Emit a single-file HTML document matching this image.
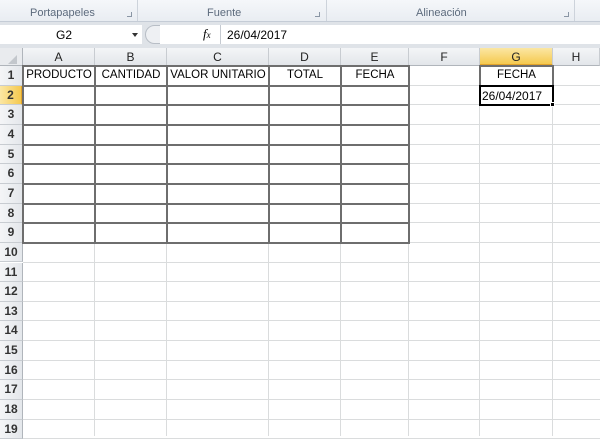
<!DOCTYPE html>
<html><head><style>
*{margin:0;padding:0;box-sizing:border-box}
body{width:600px;height:436px;overflow:hidden;background:#fff;font-family:"Liberation Sans",sans-serif;position:relative}
.a{position:absolute}
.rib{left:0;top:0;width:600px;height:22px;background:linear-gradient(#f5f7fa,#e9edf2);border-bottom:1px solid #c5ccd6}
.gl{top:7px;font-size:11px;color:#5d6b7d}
.sep{top:0;width:1px;height:21px;background:#cdd3db}
.fb{left:0;top:22px;width:600px;height:26px;background:#dfe3e8}
.ch{top:48px;height:18px;background:linear-gradient(#f4f5f7,#e3e6ea);border-right:1px solid #c8ccd1;border-bottom:1px solid #b0b5bb;font-size:12px;text-align:center;line-height:18px;color:#222}
.rh{left:0;width:23px;background:linear-gradient(90deg,#f4f5f7,#e4e7eb);border-right:1px solid #b0b5bb;border-bottom:1px solid #c8ccd1;font-size:12px;text-align:center;color:#333;font-weight:bold}
.hl{left:23px;width:577px;height:1px;background:#dadcdd}
.vl{top:66px;width:1px;height:370px;background:#dadcdd}
.t{font-size:11.5px;text-align:center;color:#000}
</style></head><body>
<div class="a rib"></div>
<div class="a gl" style="left:30px">Portapapeles</div>
<div class="a gl" style="left:207px">Fuente</div>
<div class="a gl" style="left:416px">Alineación</div>
<div class="a sep" style="left:137px"></div>
<div class="a sep" style="left:326px"></div>
<div class="a sep" style="left:574px"></div>
<div class="a" style="left:127px;top:12px;width:5px;height:5px;border-right:1px solid #8a96a5;border-bottom:1px solid #8a96a5"></div>
<div class="a" style="left:315px;top:12px;width:5px;height:5px;border-right:1px solid #8a96a5;border-bottom:1px solid #8a96a5"></div>
<div class="a" style="left:564px;top:12px;width:5px;height:5px;border-right:1px solid #8a96a5;border-bottom:1px solid #8a96a5"></div>
<div class="a fb"></div>
<div class="a" style="left:0;top:25px;width:142px;height:19px;background:#fff"></div>
<div class="a" style="left:56px;top:28px;font-size:12px">G2</div>
<div class="a" style="left:132px;top:33px;border-left:3px solid transparent;border-right:3px solid transparent;border-top:4px solid #333"></div>
<div class="a" style="left:145px;top:25px;width:50px;height:19px;border-radius:10px;background:#eef0f3;border:1px solid #b8bec6"></div>
<div class="a" style="left:160px;top:25px;width:60px;height:19px;background:#fff"></div>
<div class="a" style="left:203px;top:26px;font-size:13px;font-style:italic;font-family:'Liberation Serif',serif">f<span style="font-size:9px">x</span></div>
<div class="a" style="left:220px;top:25px;width:380px;height:19px;background:#fff;border-left:1px solid #c5cad1"></div>
<div class="a" style="left:227px;top:28px;font-size:12px">26/04/2017</div>
<div class="a" style="left:0;top:48px;width:23px;height:18px;background:#e9ebee;border-right:1px solid #b0b5bb;border-bottom:1px solid #b0b5bb"></div>
<div class="a" style="left:8px;top:55px;border-left:9px solid transparent;border-bottom:9px solid #c3c7cc"></div>
<div class="a ch" style="left:23px;width:72px">A</div>
<div class="a ch" style="left:95px;width:72px">B</div>
<div class="a ch" style="left:167px;width:102px">C</div>
<div class="a ch" style="left:269px;width:72px">D</div>
<div class="a ch" style="left:341px;width:68px">E</div>
<div class="a ch" style="left:409px;width:71px">F</div>
<div class="a ch" style="left:480px;width:73px;background:linear-gradient(#fbe7a4,#f5c94f);border-bottom:2px solid #e2a32a">G</div>
<div class="a ch" style="left:553px;width:47px">H</div>
<div id="g"></div>
<script>
var h='',R=19.65,T=66;
for(var i=0;i<19;i++){var y=T+i*R;
h+='<div class="a rh" style="top:'+y+'px;height:'+R+'px;line-height:'+R+'px;'+(i==1?'background:linear-gradient(90deg,#fbe7a4,#f5c94f);border-right:2px solid #e2a32a;':'')+'">'+(i+1)+'</div>';
h+='<div class="a hl" style="top:'+(y+R-1)+'px"></div>';}
[95,167,269,341,409,480,553].forEach(function(x){h+='<div class="a vl" style="left:'+(x-1)+'px"></div>'});
var cols=[23,95,167,269,341,409];
for(var i=0;i<=9;i++){var y=T+i*R;h+='<div class="a" style="left:22px;top:'+(y-1)+'px;width:388px;height:2px;background:#6e6e6e"></div>'}
cols.forEach(function(x){h+='<div class="a" style="left:'+(x-1)+'px;top:'+(T-1)+'px;width:2px;height:'+(9*R+2)+'px;background:#6e6e6e"></div>'});
var lab=[['PRODUCTO',23,72],['CANTIDAD',95,72],['VALOR UNITARIO',167,102],['TOTAL',269,72],['FECHA',341,68],['FECHA',480,73]];
lab.forEach(function(l){h+='<div class="a t" style="left:'+l[1]+'px;top:'+(T+3)+'px;width:'+l[2]+'px">'+l[0]+'</div>'});
h+='<div class="a" style="left:479px;top:'+(T-1)+'px;width:75px;height:'+(R+2)+'px;border:2px solid #6e6e6e"></div>';
h+='<div class="a" style="left:479px;top:'+(T+R-1)+'px;width:75px;height:'+(R+2)+'px;border:2px solid #000"></div>';
h+='<div class="a" style="left:550px;top:'+(T+2*R-3)+'px;width:5px;height:5px;background:#000;border:1px solid #fff"></div>';
h+='<div class="a" style="left:482px;top:'+(T+R+3)+'px;font-size:12px">26/04/2017</div>';
document.getElementById('g').innerHTML=h;
</script>
</body></html>
